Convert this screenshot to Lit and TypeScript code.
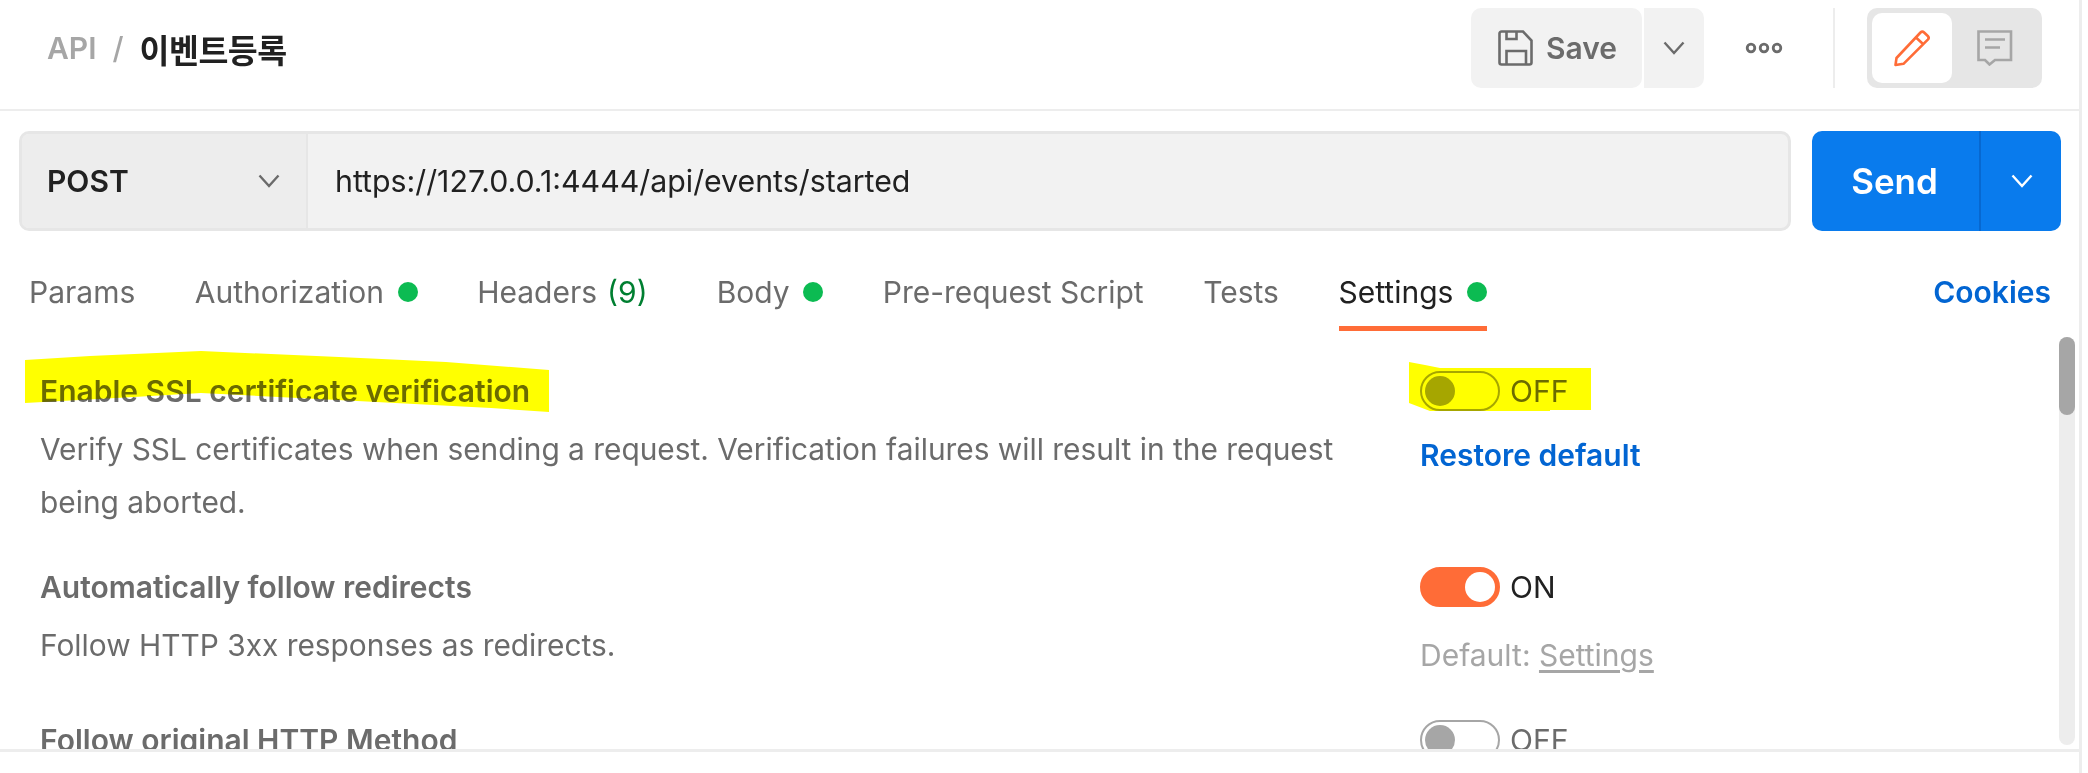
import { LitElement, html, css, svg } from "lit";
import { customElement } from "lit/decorators.js";

const chevron = (cls: string) => html`<svg class="chev ${cls}" viewBox="0 0 22 14"><path d="M1.5 1.5 L11 12 L20.5 1.5" /></svg>`;

@customElement("app-root")
export class AppRoot extends LitElement {
  static styles = css`
    :host { display: block; position: relative; width: 2088px; height: 773px; overflow: hidden; background: #fff;
      font-family: Inter, "Noto Sans CJK KR", sans-serif; font-size: 30px; color: #6b6b6b; }
    * { box-sizing: border-box; }
    .panel { width: 2082px; height: 773px; border-right: 3px solid #ededed; display: flex; flex-direction: column; }

    .header { height: 111px; flex: none; border-bottom: 2px solid #ededed; display: flex; justify-content: space-between;
      padding: 8px 37px 0 47px; }
    .crumbs { display: flex; align-items: center; height: 80px; font-weight: 600; }
    .crumb-api { color: #a6a6a6; }
    .crumb-sep { color: #a6a6a6; margin: 0 16px 0 16px; font-weight: 500; }
    .crumb-title { color: #212121; font-family: "Noto Sans CJK KR", sans-serif; font-size: 32.5px; font-weight: 700; letter-spacing: -0.5px; }
    .actions { display: flex; align-items: flex-start; }
    .save { width: 171px; height: 80px; background: #f2f2f2; border-radius: 10px; display: flex; align-items: center;
      padding-left: 27px; gap: 13px; font-weight: 600; }
    .save svg { width: 35px; height: 36px; fill: none; stroke: #6b6b6b; stroke-width: 2.6; }
    .save-arrow { width: 60px; height: 80px; margin-left: 2px; background: #f2f2f2; border-radius: 0 10px 10px 0; display: flex;
      align-items: center; justify-content: center; }
    .more { width: 36px; height: 10px; margin: 35px 0 0 42px; fill: none; stroke: #6b6b6b; stroke-width: 2.8; overflow: visible; }
    .divider { width: 2px; height: 80px; background: #ededed; margin: 0 32px 0 51px; }
    .modes { width: 175px; height: 80px; background: #e6e6e6; border-radius: 10px; padding: 5px; display: flex; }
    .mode { width: 80px; height: 70px; }
    .mode-active { background: #fff; border-radius: 10px; display: flex; align-items: center; justify-content: center; }
    .mode-idle { flex: 1; display: flex; align-items: center; justify-content: center; }
    .pencil { width: 36px; height: 37px; fill: none; stroke: #ff6c37; stroke-width: 2.6; stroke-linejoin: round; }
    .comment { width: 36px; height: 36px; fill: none; stroke: #a6a6a6; stroke-width: 2.6; }

    .chev { width: 22px; height: 14px; fill: none; stroke: #6b6b6b; stroke-width: 2.4; }
    .chev.white { stroke: #fff; }

    .request { flex: none; height: 100px; margin-top: 20px; padding: 0 18px 0 19px; display: flex; gap: 21px; }
    .url-box { flex: 1; display: flex; background: #f2f2f2; border: 3px solid #e6e6e6; border-radius: 10px; overflow: hidden; color: #212121; }
    .method { width: 286px; background: #ededed; border-right: 2px solid #e6e6e6; display: flex; align-items: center;
      justify-content: space-between; padding: 0 26px 0 25px; font-weight: 600; }
    .url { display: flex; align-items: center; padding-left: 27px; font-size: 30.3px; }
    .send { width: 249px; background: #097bed; border-radius: 10px; display: flex; color: #fff; font-weight: 600; font-size: 35px; }
    .send-label { width: 169px; display: flex; align-items: center; justify-content: center; padding-right: 2px; border-right: 2px solid #0768d0; }
    .send-arrow { flex: 1; display: flex; align-items: center; justify-content: center; padding-left: 2px; }

    .tabs { flex: none; height: 100px; display: flex; justify-content: space-between; padding: 0 28px 0 29px; }
    .tab-list { display: flex; gap: 59.6px; }
    .tab { display: flex; align-items: center; gap: 13.5px; height: 100%; border-bottom: 5px solid transparent; padding-top: 26px; }
    .tab-wide { padding-right: 9.5px; }
    .tab-on { color: #212121; border-bottom-color: #ff6c37; }
    .dot { width: 20px; height: 20px; border-radius: 50%; background: #0cbb52; }
    .count { color: #007f31; margin-left: 10px; }
    .cookies { display: flex; align-items: center; padding-top: 21px; color: #0265d2; font-weight: 600; }

    .body { flex: 1; min-height: 0; display: flex; overflow: hidden; }
    .rows { flex: 1; min-width: 0; overflow: hidden; padding: 40px 0 0 40px; }
    .row { display: grid; grid-template-columns: 1380px 1fr; margin-bottom: 38px; }
    .title { height: 40px; line-height: 40px; font-weight: 600; }
    .desc { margin-top: 12px; width: 1340px; line-height: 53px; font-size: 29.87px; }
    .switch-line { display: flex; align-items: center; gap: 10px; height: 40px; }
    .switch { width: 80px; height: 40px; border: 2px solid #a6a6a6; border-radius: 20px; padding: 3px; display: flex; }
    .knob { width: 30px; height: 30px; border-radius: 50%; background: #a6a6a6; }
    .switch-on { background: #ff6c37; border-color: #ff6c37; justify-content: flex-end; }
    .switch-on .knob { background: #fff; }
    .state-on { color: #212121; }
    .restore { margin-top: 18px; line-height: 53px; color: #0265d2; font-weight: 600; }
    .default { margin-top: 22px; line-height: 53px; color: #a6a6a6; }
    .default u { text-underline-offset: 4px; }

    .scroll { flex: none; width: 16px; margin: 6px 4px 4px 0; background: #ededed; border-radius: 8px; }
    .thumb { height: 78px; background: #a6a6a6; border-radius: 8px; }

    .footer { flex: none; height: 24px; border-top: 3px solid #ededed; }
    .marks { position: absolute; left: 0; top: 0; width: 2088px; height: 773px; mix-blend-mode: multiply; pointer-events: none; }
    .marks polygon { fill: #ffff00; }
  `;

  private renderSwitch(on: boolean) {
    return html`<div class="switch-line">
      <div class="switch ${on ? "switch-on" : ""}"><div class="knob"></div></div>
      <span class=${on ? "state-on" : ""}>${on ? "ON" : "OFF"}</span>
    </div>`;
  }

  render() {
    return html`
      <div class="panel">
        <div class="header">
          <div class="crumbs">
            <span class="crumb-api">API</span><span class="crumb-sep">/</span><span class="crumb-title">이벤트등록</span>
          </div>
          <div class="actions">
            <div class="save">
              <svg viewBox="0 0 35 36"><path d="M3.5 1.5 H25 L33.5 10.5 V32.5 a2 2 0 0 1 -2 2 H3.5 a2 2 0 0 1 -2 -2 V3.5 a2 2 0 0 1 2 -2 Z M8.5 1.5 V9 H18.5 V1.5 M8.5 34.5 V21 H28 V34.5" /></svg>
              <span>Save</span>
            </div>
            <div class="save-arrow">${chevron("")}</div>
            <svg class="more" viewBox="0 0 36 10"><circle cx="5" cy="5" r="3.8" /><circle cx="18" cy="5" r="3.8" /><circle cx="31" cy="5" r="3.8" /></svg>
            <div class="divider"></div>
            <div class="modes">
              <div class="mode mode-active">
                <svg class="pencil" viewBox="0 0 36 37"><path d="M1.5 35 L2.5 28 L26.5 2.5 a2.6 2.6 0 0 1 3.6 0 L33.8 6 a2.6 2.6 0 0 1 0 3.6 L9.5 33.8 Z M22 7.5 L29 14" /></svg>
              </div>
              <div class="mode-idle">
                <svg class="comment" viewBox="0 0 36 36"><path d="M1.5 1.5 H34 V30 H18 L12.5 34.5 L8 30 H1.5 Z M8 9.5 H28 M8 17.5 H23" /></svg>
              </div>
            </div>
          </div>
        </div>

        <div class="request">
          <div class="url-box">
            <div class="method"><span>POST</span>${chevron("")}</div>
            <div class="url">https://127.0.0.1:4444/api/events/started</div>
          </div>
          <div class="send">
            <div class="send-label">Send</div>
            <div class="send-arrow">${chevron("white")}</div>
          </div>
        </div>

        <div class="tabs">
          <div class="tab-list">
            <div class="tab">Params</div>
            <div class="tab">Authorization<span class="dot"></span></div>
            <div class="tab tab-wide"><span>Headers<span class="count">(9)</span></span></div>
            <div class="tab">Body<span class="dot"></span></div>
            <div class="tab">Pre-request Script</div>
            <div class="tab">Tests</div>
            <div class="tab tab-on">Settings<span class="dot"></span></div>
          </div>
          <div class="cookies">Cookies</div>
        </div>

        <div class="body">
          <div class="rows">
            <div class="row">
              <div>
                <div class="title">Enable SSL certificate verification</div>
                <div class="desc">Verify SSL certificates when sending a request. Verification failures will result in the request being aborted.</div>
              </div>
              <div>
                ${this.renderSwitch(false)}
                <div class="restore">Restore default</div>
              </div>
            </div>
            <div class="row">
              <div>
                <div class="title">Automatically follow redirects</div>
                <div class="desc">Follow HTTP 3xx responses as redirects.</div>
              </div>
              <div>
                ${this.renderSwitch(true)}
                <div class="default">Default: <u>Settings</u></div>
              </div>
            </div>
            <div class="row">
              <div><div class="title">Follow original HTTP Method</div></div>
              <div>${this.renderSwitch(false)}</div>
            </div>
          </div>
          <div class="scroll"><div class="thumb"></div></div>
        </div>
        <div class="footer"></div>
      </div>
      <svg class="marks" viewBox="0 0 2088 773">
        ${svg`<polygon points="25,360 90,356 201,351 339,357 446,362 549,370 549,412 491,408 357,401 201,393 134,397 25,403" />
        <polygon points="1409,362 1425,365 1440,368 1591,368 1591,410 1550,410 1550,411 1430,411 1409,403" />`}
      </svg>
    `;
  }
}
